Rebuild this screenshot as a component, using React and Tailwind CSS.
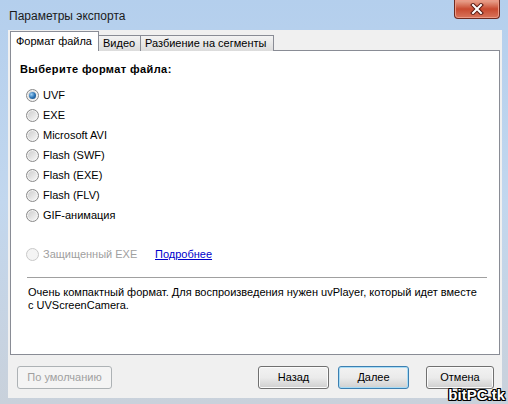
import React from "react";

const formats = ["UVF", "EXE", "Microsoft AVI", "Flash (SWF)", "Flash (EXE)", "Flash (FLV)", "GIF-анимация"];

const Radio = ({ checked, disabled }) => (
  <span
    className={
      "w-[13px] h-[13px] rounded-full border flex items-center justify-center shrink-0 " +
      (disabled
        ? "border-[#c9c9c9] bg-[#f4f4f4]"
        : "border-[#8a8a8a] bg-linear-to-br from-[#c9c9c9] to-[#fbfbfb] shadow-[inset_0_0_0_1px_#f4f4f4]")
    }
  >
    {checked && (
      <span className="w-[7px] h-[7px] rounded-full bg-radial-[at_35%_35%] from-[#9fd0f5] via-[#2f76b6] to-[#0d3f78]" />
    )}
  </span>
);

const Button = ({ children, w, primary, disabled }) => (
  <button
    className={
      "h-[23px] rounded-[3px] border text-[11px] " +
      w +
      (disabled
        ? " border-[#adb2b5] bg-[#f4f4f4] text-[#a0a0a0]"
        : primary
        ? " border-[#3c7fb1] bg-linear-to-b from-[#f2f2f2] via-[#ebebeb] to-[#d0d0d0] shadow-[inset_0_0_0_1px_#a8dcf6] text-black"
        : " border-[#707070] bg-linear-to-b from-[#f2f2f2] via-[#ebebeb] to-[#cfcfcf] shadow-[inset_0_0_0_1px_#fbfbfb] text-black")
    }
  >
    {children}
  </button>
);

export default function App() {
  return (
    <div className="relative w-[508px] h-[404px] overflow-hidden flex flex-col bg-linear-to-b from-[#b4cfed] via-[#c2d7ee] to-[#c9d1db] font-['Liberation_Sans',Arial,sans-serif]">
      {/* Title bar */}
      <div className="h-[30px] flex items-start justify-between pl-[9px] pr-[8px] shrink-0">
        <span className="pt-[8px] text-[12px] leading-[16px] text-[#1b1b1b]">Параметры экспорта</span>
        <div className="w-[46px] h-[19px] rounded-b-[4px] border border-t-0 border-[#6e2a20] bg-linear-to-b from-[#e9a894] via-[#c84a30] to-[#d8745c] flex items-center justify-center shadow-[inset_0_0_0_1px_#eb9a86]">
          <svg width="14" height="12" viewBox="0 0 14 12">
            <path d="M3 2 L11 10 M11 2 L3 10" stroke="#5a1a12" strokeWidth="4" strokeLinecap="square" />
            <path d="M3 2 L11 10 M11 2 L3 10" stroke="#ffffff" strokeWidth="2" strokeLinecap="square" />
          </svg>
        </div>
      </div>

      {/* Client area */}
      <div className="ml-[8px] mr-[6px] h-[368px] bg-[#f0f0f0] flex flex-col px-[2px] pt-[1px] text-[11px] text-black">
        {/* Tabs */}
        <div className="h-[20px] flex items-end -mb-px relative z-10">
          <div className="w-[89px] h-[20px] bg-white border border-b-0 border-[#898c95] pl-[5px] pt-[2px] leading-[14px]">
            Формат файла
          </div>
          <div className="w-[42px] h-[16px] border border-l-0 border-b-0 border-[#898c95] bg-linear-to-b from-[#f3f3f3] to-[#dcdcdc] pl-[4px] leading-[14px]">
            Видео
          </div>
          <div className="w-[133px] h-[16px] border border-l-0 border-b-0 border-[#898c95] bg-linear-to-b from-[#f3f3f3] to-[#dcdcdc] pl-[4px] leading-[14px]">
            Разбиение на сегменты
          </div>
        </div>

        {/* Panel */}
        <div className="h-[305px] bg-white border border-[#898c95] pt-[11px]">
          <div className="pl-[9px] font-bold leading-[14px] tracking-[0.4px]">Выберите формат файла:</div>

          <div className="mt-[9px] flex flex-col">
            {formats.map((f, i) => (
              <div key={f} className="h-[20px] flex items-center pl-[15px]">
                <Radio checked={i === 0} />
                <span className="ml-[4px] leading-[14px]">{f}</span>
              </div>
            ))}
          </div>

          <div className="mt-[19px] h-[20px] flex items-center pl-[15px]">
            <Radio disabled />
            <span className="ml-[4px] w-[112px] text-[#a0a0a0] leading-[14px]">Защищенный EXE</span>
            <span className="text-[#0000cc] underline leading-[14px]">Подробнее</span>
          </div>

          <div className="mt-[13px] ml-[16px] mr-[12px] h-px bg-[#a0a0a0]" />

          <div className="mt-[8px] pl-[17px] pr-[12px] leading-[13px]">
            Очень компактный формат. Для воспроизведения нужен uvPlayer, который идет вместе
            <br />с UVScreenCamera.
          </div>
        </div>

        {/* Buttons */}
        <div className="mt-[11px] flex items-start pl-[7px]">
          <Button w="w-[95px]" disabled>
            По умолчанию
          </Button>
          <div className="ml-[146px] flex">
            <Button w="w-[71px]">Назад</Button>
            <div className="ml-[9px]">
              <Button w="w-[71px]" primary>
                Далее
              </Button>
            </div>
            <div className="ml-[17px]">
              <Button w="w-[68px]">Отмена</Button>
            </div>
          </div>
        </div>
      </div>

      {/* Watermark */}
      <span className="absolute right-[3px] bottom-[2px] text-[15px] leading-[15px] font-bold text-white [text-shadow:1px_1px_0_#000,-1px_-1px_0_#000,1px_-1px_0_#000,-1px_1px_0_#000,0_1px_0_#000,0_-1px_0_#000,1px_0_0_#000,-1px_0_0_#000]">
        bitPC.tk
      </span>
    </div>
  );
}
